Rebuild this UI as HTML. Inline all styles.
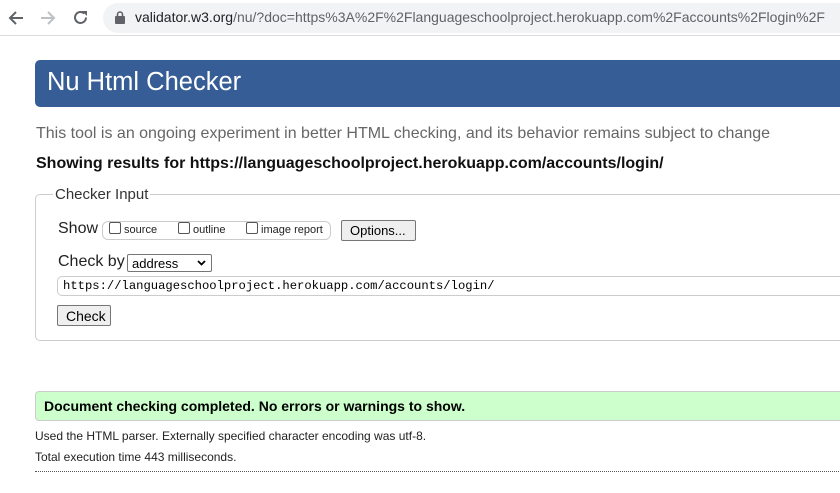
<!DOCTYPE html>
<html><head><meta charset="utf-8"><style>
*{margin:0;padding:0;box-sizing:border-box}
body{width:840px;height:493px;overflow:hidden;background:#fff;font-family:"Liberation Sans",Arial,sans-serif;position:relative}
.abs{position:absolute;white-space:nowrap}
.bar{position:absolute;left:0;top:0;width:840px;height:36px;background:#fff;border-bottom:1px solid #dadce0}
.pill{position:absolute;left:103px;top:3px;width:760px;height:30px;border-radius:15px;background:#f1f3f4}
.hdr{position:absolute;left:35px;top:60px;width:820px;height:47px;background:#365d95;border-radius:5px}
.fs{position:absolute;left:35px;top:194px;width:820px;height:147px;border:1px solid #ccc;border-radius:5px}
.cb{display:inline-block;width:12px;height:12px;border:1px solid #555;border-radius:2px;vertical-align:-1px;background:#fff}
.btn{position:absolute;background:#efefef;border:1px solid #767676;border-radius:2px;font-size:13px;color:#000}
</style></head><body>
<div class="bar">
<svg class="abs" style="left:8px;top:10px" width="16" height="16" viewBox="0 0 16 16"><path d="M15 8H2M8 2L2 8l6 6" stroke="#5f6368" stroke-width="2" fill="none"/></svg>
<svg class="abs" style="left:40px;top:10px" width="16" height="16" viewBox="0 0 16 16"><path d="M1 8h13M8 2l6 6-6 6" stroke="#bdc1c6" stroke-width="2" fill="none"/></svg>
<svg class="abs" style="left:72px;top:9px" width="17" height="17" viewBox="0 0 17 17"><path d="M14 8.5A5.5 5.5 0 1 1 12.4 4.6" stroke="#5f6368" stroke-width="2" fill="none"/><path d="M10 2h5v5z" fill="#5f6368"/></svg>
<div class="pill"></div>
<svg class="abs" style="left:115px;top:11px" width="10" height="13" viewBox="0 0 10 13"><rect x="0" y="5" width="10" height="8" rx="1" fill="#5f6368"/><path d="M2.5 5V3.5a2.5 2.5 0 0 1 5 0V5" stroke="#5f6368" stroke-width="1.6" fill="none"/></svg>
<div class="abs" style="left:135px;top:9px;font-size:14px;color:#202124">validator.w3.org<span style="color:#5f6368">/nu/?doc=https%3A%2F%2Flanguageschoolproject.herokuapp.com%2Faccounts%2Flogin%2F</span></div>
</div>
<div class="hdr"></div>
<div class="abs" style="left:47px;top:68px;font-size:25.5px;color:#fff">Nu Html Checker</div>
<div class="abs" style="left:36px;top:125px;font-size:16px;color:#666">This tool is an ongoing experiment in better HTML checking, and its behavior remains subject to change</div>
<div class="abs" style="left:36px;top:155px;font-size:16px;font-weight:bold;color:#111">Showing results for https://languageschoolproject.herokuapp.com/accounts/login/</div>
<div class="fs"></div>
<div class="abs" style="left:53px;top:186px;font-size:15px;color:#333;background:#fff;padding:0 2px">Checker Input</div>
<div class="abs" style="left:58px;top:220px;font-size:16px;color:#222">Show</div>
<div class="abs" style="left:102px;top:221px;width:229px;height:19px;border:1px solid #ccc;border-radius:6px"></div>
<div class="abs" style="left:109px;top:222px;font-size:11px;color:#222"><span class="cb"></span> source</div>
<div class="abs" style="left:178px;top:222px;font-size:11px;color:#222"><span class="cb"></span> outline</div>
<div class="abs" style="left:246px;top:222px;font-size:11px;color:#222"><span class="cb"></span> image report</div>
<div class="btn" style="left:341px;top:220px;width:75px;height:21px;padding:2px 0 0 8px">Options...</div>
<div class="abs" style="left:58px;top:253px;font-size:16px;color:#222">Check by</div>
<div class="abs" style="left:127px;top:254px;width:85px;height:18px;border:1px solid #767676;border-radius:2px;font-size:13px;padding:1px 4px;color:#000">address<svg style="position:absolute;right:5px;top:5px" width="9" height="6" viewBox="0 0 9 6"><path d="M1 1l3.5 3.5L8 1" stroke="#000" stroke-width="1.8" fill="none"/></svg></div>
<div class="abs" style="left:57px;top:276px;width:800px;height:20px;border:1px solid #ccc;border-radius:5px;font-family:'Liberation Mono',monospace;font-size:12.2px;padding:2px 5px;color:#000">https://languageschoolproject.herokuapp.com/accounts/login/</div>
<div class="btn" style="left:57px;top:305px;width:54px;height:21px;padding:2px 0 0 8px;font-size:14px">Check</div>
<div class="abs" style="left:35px;top:391px;width:820px;height:30px;background:#ccffcc;border:1px solid #ccc;border-radius:4px"></div>
<div class="abs" style="left:44px;top:398px;font-size:14px;font-weight:bold;color:#000">Document checking completed. No errors or warnings to show.</div>
<div class="abs" style="left:35px;top:429px;font-size:12px;color:#222">Used the HTML parser. Externally specified character encoding was utf-8.</div>
<div class="abs" style="left:35px;top:450px;font-size:12px;color:#222">Total execution time 443 milliseconds.</div>
<div class="abs" style="left:35px;top:471px;width:810px;border-top:1px dotted #555"></div>
</body></html>
